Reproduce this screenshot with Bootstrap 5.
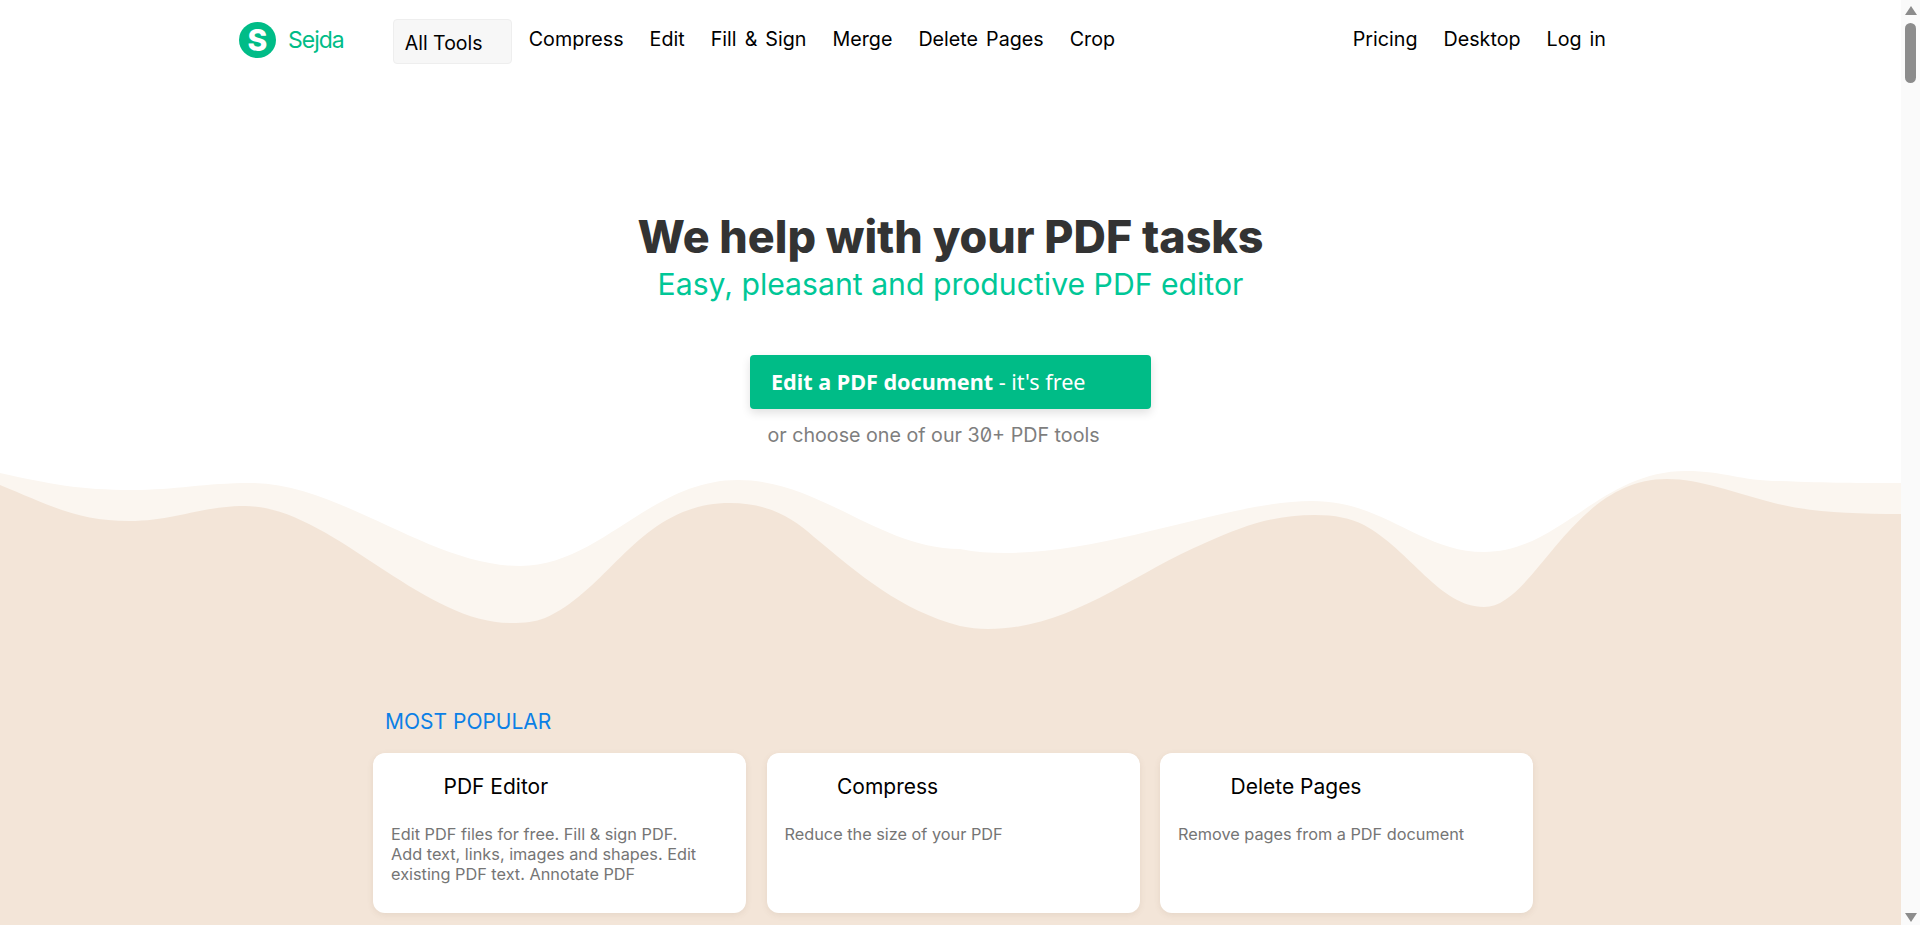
<!DOCTYPE html>
<html lang="en">
<head>
  <meta charset="UTF-8" />
  <meta name="viewport" content="width=device-width, initial-scale=1.0" />
  <title>Sejda PDF</title>
  <link rel="stylesheet" href="https://cdn.jsdelivr.net/npm/bootstrap@5.3.2/dist/css/bootstrap.min.css">
  <style>
    html, body { height: 100%; overflow: hidden; }
    body { font-family: Inter, "Liberation Sans", sans-serif; color: #000; background: #fff; }
    .page-main { width: 1901px; height: 925px; overflow: hidden; flex: none; }
    .top-bar { height: 80px; padding: 0 295px 0 239px; }
    .brand-dot { width: 37px; height: 36px; background: #00bc87; color: #fff; font-weight: 800; font-size: 30px; line-height: 1; }
    .brand-name { color: #00bc87; font-size: 23px; letter-spacing: -1px; margin-left: 12px; margin-right: 49px; }
    .tool-menu { width: 119px; height: 45px; background: #f7f7f7; border: 1px solid #eee; border-radius: 4px; padding: 10px 0 0 11px; font-size: 19.5px; line-height: 26px; color: #000; margin-top: 2px; margin-right: 17px; }
    .top-gap { gap: 26px; }
    .top-link { font-size: 19.7px; word-spacing: 2.5px; color: #000; text-decoration: none; white-space: nowrap; }
    .hero-box { height: 390px; padding-top: 130px; }
    .hero-title { font-size: 44.8px; font-weight: 800; color: #333; line-height: 54px; margin: 0; }
    .hero-sub { font-size: 30.2px; color: #00c797; line-height: 36px; margin: 2px 0 0; font-weight: 400; }
    .edit-btn { width: 401px; height: 54px; margin-top: 53px; background: #00bc87; color: #fff; font-family: "Noto Sans", sans-serif; font-size: 21.6px; border-radius: 4px; padding: 0 0 0 21px; box-shadow: 0 4px 10px rgba(0,0,0,.12); }
    .hero-note { font-size: 19.7px; color: #7e7e7e; margin-top: 14px; line-height: 24px; padding-right: 34px; font-feature-settings: "zero"; }
    .wave-art { display: block; width: 1901px; height: 190px; }
    .lower-part { background: #f3e5d8; height: 265px; padding-left: 373px; }
    .section-label { color: #0b80e6; font-size: 21px; line-height: 24px; padding-left: 12px; margin: 0; padding-top: 50px; box-sizing: content-box; }
    .card-row { gap: 20.5px; margin-top: 19px; }
    .tool-card { width: 373px; height: 160px; background: #fff; border-radius: 12px; box-shadow: 0 2px 6px rgba(120,90,60,.1); padding: 21px 18px; }
    .tool-name { font-size: 21px; line-height: 26px; padding-left: 52.5px; margin: 0; font-weight: 400; }
    .tool-text { font-size: 16.3px; line-height: 20px; color: #757575; margin: 24px 0 0; max-width: 312px; }
    .fake-scroll { width: 19px; height: 925px; background: #fafafa; flex: none; }
    .scroll-up, .scroll-down { width: 0; height: 0; border-left: 6.5px solid transparent; border-right: 6.5px solid transparent; }
    .scroll-up { border-bottom: 9px solid #8c8c8c; margin-top: 6px; }
    .scroll-down { border-top: 9px solid #8c8c8c; margin-bottom: 3px; }
    .scroll-thumb { width: 11px; height: 60px; background: #8c8c8c; border-radius: 6px; margin-top: 8px; }
  </style>
</head>
<body>
  <div class="d-flex">
    <div class="page-main">
      <nav class="top-bar d-flex align-items-center">
        <a class="d-flex align-items-center text-decoration-none" href="#">
          <span class="brand-dot rounded-circle d-flex align-items-center justify-content-center">S</span>
          <span class="brand-name">Sejda</span>
        </a>
        <div class="tool-menu">All Tools</div>
        <div class="d-flex top-gap">
          <a class="top-link" href="#">Compress</a>
          <a class="top-link" href="#">Edit</a>
          <a class="top-link" href="#">Fill &amp; Sign</a>
          <a class="top-link" href="#">Merge</a>
          <a class="top-link" href="#">Delete Pages</a>
          <a class="top-link" href="#">Crop</a>
        </div>
        <div class="d-flex top-gap ms-auto">
          <a class="top-link" href="#">Pricing</a>
          <a class="top-link" href="#">Desktop</a>
          <a class="top-link" href="#">Log in</a>
        </div>
      </nav>

      <section class="hero-box text-center d-flex flex-column align-items-center">
        <h1 class="hero-title">We help with your PDF tasks</h1>
        <h2 class="hero-sub">Easy, pleasant and productive PDF editor</h2>
        <a class="edit-btn d-flex align-items-center text-decoration-none" href="#"><strong>Edit a PDF document</strong>&nbsp;- it's free</a>
        <div class="hero-note">or choose one of our 30+ PDF tools</div>
      </section>

      <svg class="wave-art" viewBox="0 470 1901 190" preserveAspectRatio="none" aria-hidden="true">
        <path fill="#fbf6f0" d="M0,473 C50,484 80,490 132,490 C175,490 205,483 251,483 C340,483 430,566 520,566 C600,566 650,480 738,480 C820,480 880,549 960,549 C975,552 990,553 1006,553 C1110,553 1230,501 1312,501 C1385,501 1420,552 1484,552 C1560,552 1600,471 1686,471 C1725,471 1740,481 1780,481 C1830,483 1860,483 1901,483 V660 H0 Z"/>
        <path fill="#f3e5d8" d="M0,485 C45,503 75,521 129,521 C175,521 200,506 245,506 C330,506 420,623 511,623 C525,623 535,622 545,618 C610,590 640,503 730,503 C765,503 790,515 814,537 C860,575 900,610 960,626 C970,628 978,629 988,629 C1070,629 1130,575 1205,543 C1245,525 1275,515 1315,515 C1335,515 1350,518 1364,525 C1410,550 1440,607 1484,607 C1535,607 1570,479 1667,479 C1700,479 1735,493 1774,503 C1810,512 1850,514 1901,514 V660 H0 Z"/>
      </svg>

      <section class="lower-part">
        <h3 class="section-label fw-normal">MOST POPULAR</h3>
        <div class="d-flex card-row">
          <div class="tool-card">
            <h4 class="tool-name">PDF Editor</h4>
            <p class="tool-text">Edit PDF files for free. Fill &amp; sign PDF. Add text, links, images and shapes. Edit existing PDF text. Annotate PDF</p>
          </div>
          <div class="tool-card">
            <h4 class="tool-name">Compress</h4>
            <p class="tool-text">Reduce the size of your PDF</p>
          </div>
          <div class="tool-card">
            <h4 class="tool-name">Delete Pages</h4>
            <p class="tool-text">Remove pages from a PDF document</p>
          </div>
        </div>
      </section>
    </div>
    <div class="fake-scroll d-flex flex-column align-items-center">
      <div class="scroll-up"></div>
      <div class="scroll-thumb"></div>
      <div class="scroll-down mt-auto"></div>
    </div>
  </div>
  <script src="https://cdn.jsdelivr.net/npm/bootstrap@5.3.2/dist/js/bootstrap.bundle.min.js"></script>
</body>
</html>
